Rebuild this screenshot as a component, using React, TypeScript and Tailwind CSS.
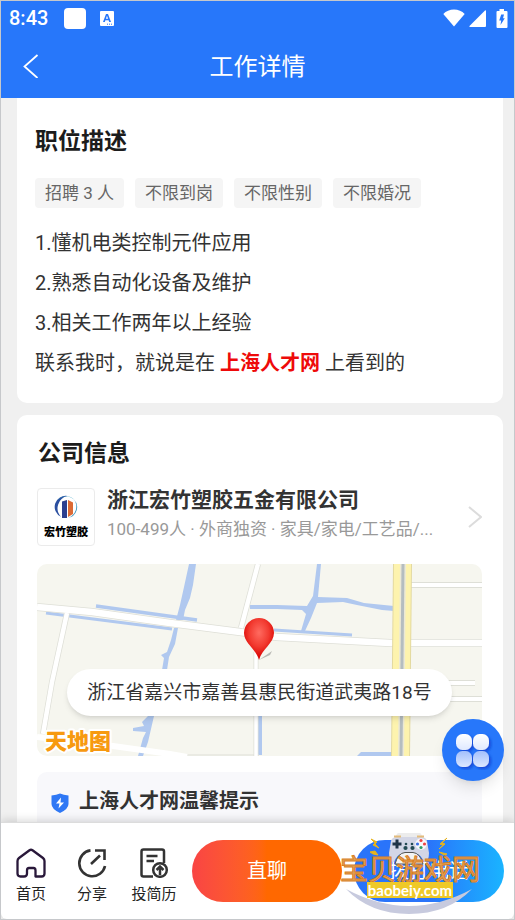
import React from 'react';

const tags = ['招聘 3 人', '不限到岗', '不限性别', '不限婚况'];

const requirements = ['1.懂机电类控制元件应用', '2.熟悉自动化设备及维护', '3.相关工作两年以上经验'];

const StatusBar: React.FC = () => (
  <div className="flex h-[34px] items-center pl-2 pr-1.5 text-white">
    <span className="text-xl font-medium">8:43</span>
    <span className="ml-4 h-[21px] w-[22px] rounded bg-white" />
    <svg className="ml-3.5 h-[15px] w-[14px]" viewBox="0 0 14 15">
      <rect width="14" height="15" rx="1" fill="#fff" />
      <path d="M3 11L6 3H8L11 11H9.200L8.600 9.300H5.400L4.800 11ZM5.900 7.800H8.100L7 4.800Z" fill="#2777fa" fillRule="evenodd" />
      <path d="M7 13.200H12.500" stroke="#2777fa" strokeWidth="1" strokeDasharray="1 1" />
    </svg>
    <svg className="ml-auto h-[18px] w-[22px]" viewBox="0 0 22 18" fill="#fff">
      <path d="M11 17.500L0.300 5C3 2.200 6.800 0.500 11 0.500S19 2.200 21.700 5Z" />
    </svg>
    <svg className="ml-1 h-[17px] w-[17px]" viewBox="0 0 17 17" fill="#fff">
      <path d="M16 0.500Q17 0 17 1V16Q17 17 16 17H1Q0 17 0.500 16Z" />
    </svg>
    <svg className="ml-2.5 h-[19px] w-[12px]" viewBox="0 0 12 19">
      <path d="M3.500 0h4.500v2H10.500Q11.500 2 11.500 3V18Q11.500 19 10.500 19H1.500Q0.500 19 0.500 18V3Q0.500 2 1.500 2H3.500Z" fill="#fff" />
      <path d="M5.200 5.500H8L7 9.300H8.800L4.500 16L5.200 11.500H3.200Z" fill="#2777fa" />
    </svg>
  </div>
);

const CompanyLogo: React.FC = () => (
  <div className="flex h-[58px] w-[58px] shrink-0 flex-col items-center rounded border border-[#ebebeb] pt-1.5">
    <svg className="h-6 w-6" viewBox="0 0 24 24">
      <path d="M13.500 1A11 11 0 0 0 7 21.800A12.500 12.500 0 0 1 13.500 1Z" fill="#2b4fa0" />
      <path d="M3 6A11 11 0 0 1 20.500 5A11.500 11.500 0 0 0 3 6Z" fill="#2f9fc0" />
      <path d="M20 4.500A11 11 0 0 1 14 23A12 12 0 0 0 20 4.500Z" fill="#3a93bd" />
      <path d="M8 6.500L13 5V23H8Z" fill="#2c3f8f" />
      <path d="M14 5L19 7.500V19L14 22Z" fill="#dc6a35" />
    </svg>
    <span className="mt-1.5 whitespace-nowrap text-[11px] leading-4 font-black text-black">宏竹塑胶</span>
  </div>
);

const MapDrawing: React.FC = () => (
  <svg className="h-full w-full" viewBox="0 0 445 192" preserveAspectRatio="xMidYMid slice">
    <defs>
      <radialGradient id="pin" cx="0.5" cy="0.35" r="0.6">
        <stop offset="0" stopColor="#ff6b60" />
        <stop offset="0.55" stopColor="#f23a30" />
        <stop offset="1" stopColor="#d90000" />
      </radialGradient>
    </defs>
    <rect width="445" height="192" fill="#f6f6ef" />

    {/* rivers */}
    <g fill="#b0c8ef">
      <path d="M152 0H159L156 21L153 34L148 46L146 56H139L143 41L147 23Z" />
      <path d="M137 64H141L138 80L132 93L130 106H125L127 94L124 91L130 88L134 76Z" />
      <path d="M111 152H117L111 178L106 192H101L106 174L109 168L96 167V164L107 162L105 158Z" />
      <path d="M280 0H284L281 33L310 34L327 39L357 42V47L345 46L320 41L306 38L280 39L274 54L268 67H264L269 50L265 46L240 45L213 45V41L240 41L270 42L276 32Z" />
      <path d="M320 192L324 188H356V192Z" />
    </g>
    <g fill="none" stroke="#b0c8ef">
      <path d="M59 42L160 56" strokeWidth="3.500" />
      <path d="M9 49L135 65" strokeWidth="3" />
      <path d="M237 66L315 71" strokeWidth="3" />
      <path d="M223 150V191" strokeWidth="4" />
    </g>

    {/* streets, a grey edge under a white line */}
    <g fill="none" stroke="#dedfd7">
      <path d="M0 43L55 48L133 59L203 68L240 73L353 79H445" strokeWidth="8" />
      <path d="M30 49L15 118L6 170" strokeWidth="6" />
      <path d="M221 0L204 64" strokeWidth="6" />
      <path d="M219 88V192" strokeWidth="5" />
      <path d="M150 191H222" strokeWidth="1" />
      <path d="M374 21H445M374 119H438M374 135H445" strokeWidth="6" />
    </g>
    <g fill="none" stroke="#fff">
      <path d="M0 43L55 48L133 59L203 68L240 73L353 79H445" strokeWidth="6.500" />
      <path d="M30 49L15 118L6 170" strokeWidth="4.500" />
      <path d="M221 0L204 64" strokeWidth="4.500" />
      <path d="M219 88V192" strokeWidth="3.500" />
      <path d="M0 173L76 182L133 190L150 193" strokeWidth="6" />
      <path d="M374 21H445M374 119H438M374 135H445" strokeWidth="4" />
    </g>

    {/* highway */}
    <path d="M356 0H375L373 192H354Z" fill="#e3d9a0" />
    <path d="M357 0H374L372 192H355Z" fill="#fdf3ae" />
    <path d="M363 0H369L367 192H361Z" fill="#ece9d5" />
    <path d="M364.500 0H367.500L365.500 192H362.500Z" fill="#b5bdc0" />

    <path d="M222 96L235 87L233 91Z" fill="#b9b9b4" />
    <path d="M222 96C219 85 207 79 207 69A15 15 0 0 1 237 69C237 79 225 85 222 96Z" fill="url(#pin)" />

    <text x="8" y="185" fontSize="22" fontWeight="900" fill="#f79a10" stroke="#fff" strokeWidth="4" strokeLinejoin="round" paintOrder="stroke">
      天地图
    </text>
  </svg>
);

const Watermark: React.FC = () => (
  <div className="pointer-events-none absolute right-[34px] top-2.5 flex h-[86px] w-[140px] flex-col items-center">
    <svg className="absolute inset-0 h-full w-full" viewBox="0 0 140 86">
      <circle cx="69" cy="10" r="15" fill="#ececec" />
      <path d="M51 8Q52 4 57 4H81Q86 4 87 8L89 20Q89 29 84 29Q81 22 76 20H62Q57 22 54 29Q49 29 49 20Z" fill="#d3d6e6" />
      <path d="M54 3.500H61M77 3.500H84" stroke="#e3bb7b" strokeWidth="1.800" />
      <path d="M57 6.500V15.500M52.500 11H61.500" stroke="#1f3347" strokeWidth="3" />
      <circle cx="81" cy="11" r="5.800" fill="#f7f7fb" />
      <circle cx="81" cy="7.500" r="1.600" fill="#e44" />
      <circle cx="81" cy="14.500" r="1.600" fill="#2c9a65" />
      <circle cx="77.500" cy="11" r="1.600" fill="#3b6fe0" />
      <circle cx="84.500" cy="11" r="1.600" fill="#e44" />
      <g fill="#234a53">
        <circle cx="66" cy="11" r="1.300" />
        <circle cx="72" cy="11" r="1.300" />
        <circle cx="65.500" cy="15" r="2.100" />
        <circle cx="72.500" cy="15" r="2.100" />
      </g>
      <path d="M55 31Q58 20 65 19.500H73Q80 20 83 31Z" fill="#f3f3f3" stroke="#555" strokeWidth="1" />
      <path d="M31 6L37 9L35 11L39 15L33 12L35 10ZM30 19L35 18L38 22L33 21Z" fill="#e6b31e" stroke="#e6b31e" />
      <path d="M107 5L102 10L105 11L99 16L103 12L100 11ZM99 19L107 21L104 22Z" fill="#e6b31e" stroke="#e6b31e" />
      <path d="M6 56Q69 90 132 56Q108 81 69 81Q30 81 6 56Z" fill="#c7cade" />
    </svg>
    <svg className="absolute inset-x-0 top-5 h-9 w-full overflow-visible" viewBox="0 0 140 36">
      <text x="0" y="27" fontSize="28" fontWeight="400" fill="#e2a05a" stroke="#d9801f" strokeWidth="1">
        宝贝游戏网
      </text>
    </svg>
    <span className="relative mt-[49px] h-4 w-[86px] bg-[#efc928] text-center text-[15px] leading-4 font-bold text-white font-['Lato',sans-serif]">
      baobeiy.com
    </span>
  </div>
);

const App: React.FC = () => {
  return (
    <div className="relative flex h-screen flex-col overflow-hidden border border-[#c6c8cb] bg-[#f0f0f0] text-[#333] font-['Roboto','Noto_Sans_CJK_SC',sans-serif]">
      <header className="shrink-0 bg-[#2777fa]">
        <StatusBar />
        <div className="relative flex h-[63px] items-center justify-center">
          <button type="button" aria-label="返回" className="absolute left-[22px] top-[19px]">
            <svg className="h-6 w-4" viewBox="0 0 16 24" fill="none" stroke="#fff" strokeWidth="1.800">
              <path d="M14.500 1L1.500 12.500L14.500 24" />
            </svg>
          </button>
          <h1 className="text-2xl text-white">工作详情</h1>
        </div>
      </header>

      <main className="min-h-0 flex-1 overflow-hidden pl-4 pr-[11px]">
        <section className="rounded-b-[10px] bg-white px-[18px] pb-5 pt-7">
          <h2 className="text-[23px] leading-8 font-bold text-[#1c1c1c]">职位描述</h2>
          <ul className="mt-5 flex gap-[11px]">
            {tags.map((tag) => (
              <li key={tag} className="rounded-sm bg-[#f5f5f5] px-2.5 text-[17px] leading-[30px] whitespace-nowrap text-[#666]">
                {tag}
              </li>
            ))}
          </ul>
          <div className="mt-[15px] text-xl leading-10">
            {requirements.map((item) => (
              <p key={item}>{item}</p>
            ))}
            <p>
              联系我时，就说是在 <a href="#" className="font-bold text-[#ee0a0a]">上海人才网</a> 上看到的
            </p>
          </div>
        </section>

        <section className="mt-3 rounded-t-[10px] bg-white pl-5 pr-[21px] pt-[23px]">
          <h2 className="pl-px text-[23px] leading-8 font-bold text-[#1c1c1c]">公司信息</h2>
          <a href="#" className="mt-[18px] flex items-center">
            <CompanyLogo />
            <div className="ml-3 min-w-0 flex-1">
              <h3 className="text-[21px] leading-6 font-bold whitespace-nowrap">浙江宏竹塑胶五金有限公司</h3>
              <p className="truncate text-[17px] leading-[34px] text-[#999]">100-499人 · 外商独资 · 家具/家电/工艺品/...</p>
            </div>
            <svg className="h-[22px] w-[14px]" viewBox="0 0 14 22" fill="none" stroke="#dcdcdc" strokeWidth="2">
              <path d="M1 1L13 11L1 21" />
            </svg>
          </a>

          <div className="relative mt-[18px] h-48 overflow-hidden rounded-[10px]">
            <MapDrawing />
            <p className="absolute inset-x-[30px] top-[105px] rounded-full bg-white text-center text-[19px] leading-[47px] whitespace-nowrap shadow-md">
              浙江省嘉兴市嘉善县惠民街道武夷路18号
            </p>
          </div>

          <div className="mt-4 flex rounded-t-[10px] bg-[#f8f8fb] px-3.5 pb-10 pt-[15px]">
            <svg className="mt-1.5 h-5 w-[18px]" viewBox="0 0 18 20">
              <path d="M9 0.500Q12.500 2 17.500 2.500V11Q17.500 16 9 20Q0.500 16 0.500 11V2.500Q5.500 2 9 0.500Z" fill="#2f78f5" />
              <path d="M10 4.500L5 10.500H8.500L7.500 15.500L13 9.500H9.500Z" fill="#fff" />
            </svg>
            <h3 className="ml-2.5 text-xl leading-7 font-bold">上海人才网温馨提示</h3>
          </div>
        </section>
      </main>

      <button type="button" aria-label="菜单" className="absolute bottom-[138px] right-2.5 flex size-[62px] items-center justify-center rounded-full bg-[#2777fa] shadow-lg">
        <svg className="h-10 w-10" viewBox="0 0 40 40">
          <defs>
            <linearGradient id="petalTop" x1="0" y1="0" x2="0" y2="1">
              <stop offset="0" stopColor="#fff" />
              <stop offset="1" stopColor="#dfe9ff" />
            </linearGradient>
            <linearGradient id="petalBottom" x1="0" y1="0" x2="0" y2="1">
              <stop offset="0" stopColor="#a3c0fc" />
              <stop offset="1" stopColor="#dce7ff" />
            </linearGradient>
            <filter id="petalShadow" x="-30%" y="-30%" width="180%" height="180%">
              <feDropShadow dx="2" dy="2" stdDeviation="1.500" floodColor="#0b3fd0" floodOpacity="0.800" />
            </filter>
          </defs>
          <g filter="url(#petalShadow)">
            <rect x="3" y="4" width="16" height="16" rx="6.500" fill="url(#petalTop)" />
            <rect x="20" y="4" width="16" height="16" rx="6.500" fill="url(#petalTop)" />
            <rect x="3" y="21" width="16" height="16" rx="6.500" fill="url(#petalBottom)" />
            <rect x="20" y="21" width="16" height="16" rx="6.500" fill="url(#petalBottom)" />
          </g>
        </svg>
      </button>

      <footer className="relative flex h-[97px] shrink-0 items-center rounded-b-md border-t border-[#dcdcdc] bg-white pr-2.5 shadow-[0_-2px_8px_rgba(0,0,0,0.15)]">
        <nav className="flex pt-3 text-[15px] leading-6 text-[#222]">
          <a href="#" className="flex w-[60px] flex-col items-center gap-1">
            <svg className="h-[30px] w-[30px]" viewBox="0 0 30 30" fill="none" stroke="#29183a" strokeWidth="2.300" strokeLinejoin="round">
              <path d="M13.500 2.300Q15 1.200 16.500 2.300L27 10Q28.500 11.200 28.500 13V25.500Q28.500 28.500 25.500 28.500H19.500V22.500Q19.500 20 17.500 20H13Q11 20 11 22.500V25.500Q11 28.500 8 28.500H4.500Q1.500 28.500 1.500 25.500V13Q1.500 11.200 3 10Z" />
            </svg>
            首页
          </a>
          <a href="#" className="flex w-[62px] flex-col items-center gap-1">
            <svg className="h-[30px] w-[30px]" viewBox="0 0 30 30" fill="none" stroke="#333" strokeWidth="2.600">
              <path d="M13.500 2.400A13 13 0 1 0 28 18" />
              <path d="M18 2.500H27.500V12M14 16L23 7.500" />
            </svg>
            分享
          </a>
          <a href="#" className="flex w-[62px] flex-col items-center gap-1">
            <svg className="h-[30px] w-[30px]" viewBox="0 0 30 30" fill="none" stroke="#333" strokeWidth="2.500">
              <path d="M14 28.500H4.500Q2.500 28.500 2.500 26.500V3.500Q2.500 1.500 4.500 1.500H23Q25 1.500 25 3.500V15" />
              <path d="M7.500 8H18.500M7.500 13H15" />
              <circle cx="21" cy="22" r="6.800" />
              <path d="M21 27V19M17.500 22L21 18.500L24.500 22" />
            </svg>
            投简历
          </a>
        </nav>
        <div className="ml-[7px] flex flex-1 gap-3">
          <button type="button" className="h-[62px] flex-1 rounded-full bg-linear-to-r from-[#f94444] to-[#ff6800] to-50% text-xl text-white">
            直聊
          </button>
          <button type="button" className="h-[62px] flex-1 rounded-full bg-linear-to-r from-[#2a74fa] from-50% to-[#1ab4ff] text-xl text-white">
            拨打电话
          </button>
        </div>
        <Watermark />
      </footer>
    </div>
  );
};

export default App;
